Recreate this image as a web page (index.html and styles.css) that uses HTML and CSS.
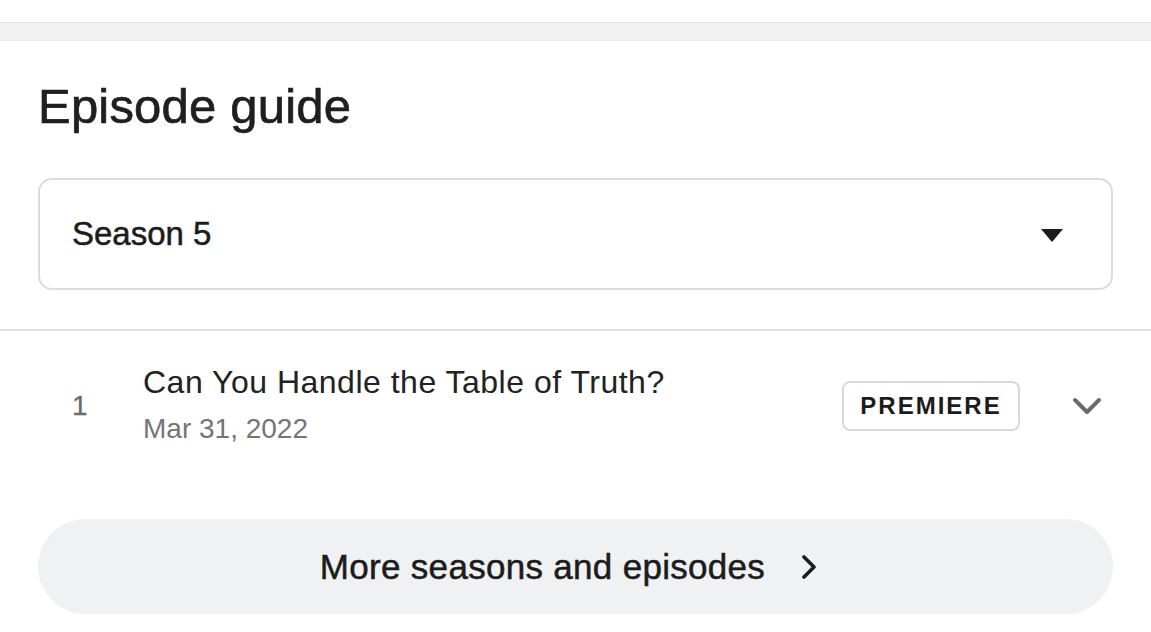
FILE: index.html
```html
<!DOCTYPE html>
<html lang="en">
<head>
<meta charset="utf-8">
<title>Episode guide</title>
<link rel="stylesheet" href="styles.css">
</head>
<body>
<div class="top"></div>
<div class="band"></div>
<section class="guide">
  <div class="guide-head">
    <h1 class="title">Episode guide</h1>
    <div class="select">
      <span class="select-label">Season 5</span>
      <svg class="select-caret" width="22" height="13" viewBox="0 0 22 13"><polygon points="0,0 22,0 11,13" fill="#1c1c1c"/></svg>
    </div>
  </div>
  <div class="divider"></div>
  <div class="episode">
    <div class="ep-num">1</div>
    <div class="ep-info">
      <div class="ep-title">Can You Handle the Table of Truth?</div>
      <div class="ep-date">Mar 31, 2022</div>
    </div>
    <div class="badge">PREMIERE</div>
    <svg class="ep-chevron" width="30" height="20" viewBox="0 0 30 20"><polyline points="3,3 15,15 27,3" fill="none" stroke="#6b6b6b" stroke-width="4" stroke-linecap="round" stroke-linejoin="round"/></svg>
  </div>
  <div class="more-wrap">
    <button class="more">
      <span class="more-label">More seasons and episodes</span>
      <svg class="more-chevron" width="16" height="24" viewBox="0 0 16 24"><polyline points="3,2 13,12 3,22" fill="none" stroke="#1c1c1c" stroke-width="3.6" stroke-linecap="round" stroke-linejoin="round"/></svg>
    </button>
  </div>
</section>
</body>
</html>
```
FILE: styles.css
```css
* { box-sizing: border-box; }
html, body { margin: 0; padding: 0; background: #ffffff; }
body {
  font-family: "Liberation Sans", Arial, sans-serif;
  color: #1f1f1f;
  width: 1151px;
  overflow: hidden;
}
.top { height: 22px; background: #ffffff; }
.band {
  height: 19px;
  background: #f0f1f3;
  border-top: 1px solid #e4e5e7;
  border-bottom: 1px solid #e6e6e8;
}
.guide-head { padding: 41px 38px 0 38px; }
.title {
  margin: 0;
  font-size: 49px;
  line-height: 48px;
  font-weight: normal;
  -webkit-text-stroke: 0.7px #1f1f1f;
  color: #1f1f1f;
  letter-spacing: 0.2px;
}
.select {
  margin-top: 48px;
  height: 112px;
  border: 2px solid #dcdcdc;
  border-radius: 14px;
  display: flex;
  align-items: center;
  justify-content: space-between;
  padding: 0 48px 0 32px;
}
.select-label {
  font-size: 33px;
  color: #1c1c1c;
  -webkit-text-stroke: 0.5px #1c1c1c;
}
.select-caret { display: block; margin-top: 2px; }
.divider { margin-top: 39px; height: 2px; background: #dedede; }
.episode {
  display: flex;
  align-items: center;
  padding: 31px 49px 0 72px;
}
.ep-num {
  width: 71px;
  font-size: 28px;
  color: #6b6b6b;
  -webkit-text-stroke: 0.3px #6b6b6b;
  padding-top: 4px;
}
.ep-info { flex: 1; }
.ep-title {
  font-size: 32px;
  line-height: 40px;
  color: #222222;
  letter-spacing: 0.5px;
}
.ep-date {
  margin-top: 10px;
  font-size: 28px;
  line-height: 34px;
  color: #757575;
}
.badge {
  height: 50px;
  width: 178px;
  border: 2px solid #d9d9d9;
  border-radius: 8px;
  display: flex;
  align-items: center;
  justify-content: center;
  font-weight: bold;
  font-size: 24px;
  letter-spacing: 2px;
  color: #1c1c1c;
  margin-top: 4px;
}
.ep-chevron { display: block; margin-left: 52px; margin-top: 6px; }
.more-wrap { padding: 73px 38px 0 38px; }
.more {
  width: 100%;
  height: 95px;
  border: none;
  border-radius: 48px;
  background: #f0f1f3;
  display: flex;
  align-items: center;
  justify-content: center;
  gap: 36px;
  font-family: "Liberation Sans", Arial, sans-serif;
  padding: 0 14px 0 0;
}
.more-label {
  font-size: 35px;
  color: #1c1c1c;
  -webkit-text-stroke: 0.5px #1c1c1c;
  letter-spacing: 0.3px;
}
.more-chevron { display: block; }
```
